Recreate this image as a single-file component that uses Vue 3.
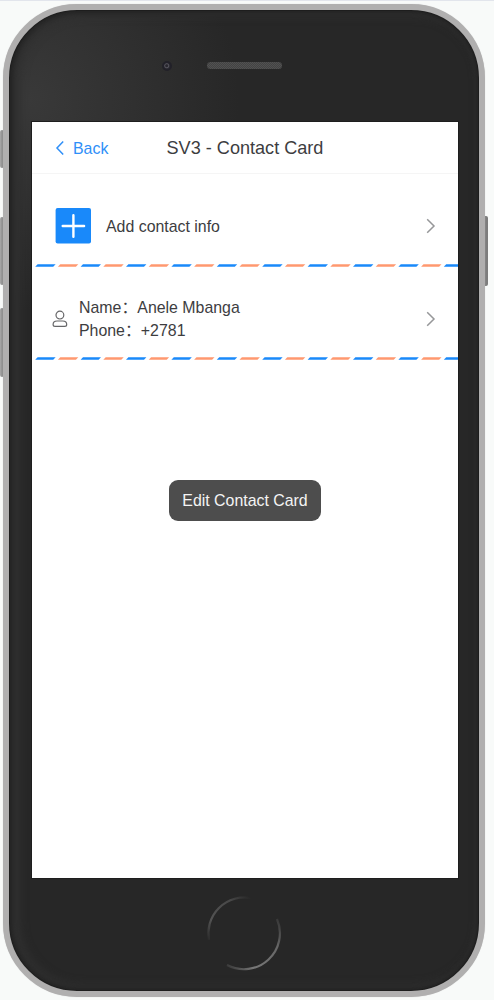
<script setup>
const period = 45.4
const dashes = Array.from({ length: 20 }, (_, i) => {
  const x = 3.2 + (i * period) / 2
  return {
    points: `${x},2.8 ${x + 2.4},0.2 ${x + 20.4},0.2 ${x + 18},2.8`,
    kind: i % 2 ? 'orange' : 'blue',
  }
})
</script>

<template>
  <div class="stage">
    <i class="key mute"></i>
    <i class="key up"></i>
    <i class="key down"></i>
    <i class="key power"></i>
    <div class="phone">
      <div class="top">
        <i class="camera"></i>
        <i class="speaker"></i>
      </div>
      <main class="screen">
        <header class="nav">
          <a class="back">
            <svg class="back-arrow" width="10" height="16" viewBox="0 0 10 16"><path d="M8.2 1.6 2 8l6.2 6.4" /></svg>
            <span>Back</span>
          </a>
          <h1>SV3 - Contact Card</h1>
        </header>
        <section class="card add">
          <svg class="plus" width="36" height="36" viewBox="0 0 36 36">
            <rect x="0.6" y="0" width="35.4" height="35.4" rx="2" />
            <path d="M18.4 7.3v21.4M7.7 18h21.4" />
          </svg>
          <span class="label">Add contact info</span>
          <svg class="arrow" width="10" height="16" viewBox="0 0 10 16"><path d="M1.2 1.3 8 8l-6.8 6.7" /></svg>
          <svg class="stripe" width="426" height="3"><polygon v-for="d in dashes" :key="d.points" :points="d.points" :class="d.kind" /></svg>
        </section>
        <section class="card edit">
          <svg class="person" width="16" height="18" viewBox="0 0 16 18">
            <circle cx="7.9" cy="5.1" r="3.9" />
            <path d="M5 11h5.800c2.200 0 3.900 1.500 3.900 3.500 0 1.200-.7 1.900-1.900 1.900H3c-1.200 0-1.900-.7-1.900-1.900C1.100 12.500 2.800 11 5 11Z" />
          </svg>
          <div class="details">
            <div>Name：Anele Mbanga</div>
            <div>Phone：+2781</div>
          </div>
          <svg class="arrow" width="10" height="16" viewBox="0 0 10 16"><path d="M1.2 1.3 8 8l-6.8 6.7" /></svg>
          <svg class="stripe" width="426" height="3"><polygon v-for="d in dashes" :key="d.points" :points="d.points" :class="d.kind" /></svg>
        </section>
        <div class="toast">Edit Contact Card</div>
      </main>
      <div class="bottom">
        <svg class="home" width="76" height="76" viewBox="0 0 76 76">
          <defs>
            <linearGradient id="homeUpper" gradientUnits="userSpaceOnUse" x1="3" y1="48" x2="44" y2="2">
              <stop offset="0" stop-color="#272727" />
              <stop offset=".3" stop-color="#535353" />
              <stop offset=".75" stop-color="#484848" />
              <stop offset="1" stop-color="#272727" />
            </linearGradient>
            <linearGradient id="homeLower" gradientUnits="userSpaceOnUse" x1="20" y1="70" x2="73" y2="21">
              <stop offset="0" stop-color="#3a3a3a" />
              <stop offset=".25" stop-color="#777" />
              <stop offset=".7" stop-color="#666" />
              <stop offset="1" stop-color="#303030" />
            </linearGradient>
          </defs>
          <path d="M3 45A36 36 0 0 1 45 3" stroke="url(#homeUpper)" />
          <path d="M21 70A36 36 0 0 0 71 24" stroke="url(#homeLower)" />
        </svg>
      </div>
    </div>
  </div>
</template>

<style>
body {
  background: #f8faf9;
}
</style>

<style scoped>
.stage {
  position: relative;
  box-sizing: border-box;
  width: 494px;
  height: 1000px;
  padding: 3px 0 0 3px;
  overflow: hidden;
  border-top: 1px solid #e2e5ec;
  background: #f8faf9;
  font-family: "Liberation Sans", "Noto Sans CJK SC", sans-serif;
}

.key {
  position: absolute;
  background: linear-gradient(90deg, #aaa, #858585 70%, #777);
  border-radius: 2px;
}
.mute { left: 0; top: 129px; width: 4px; height: 38px; }
.up { left: 0; top: 216px; width: 4px; height: 68px; }
.down { left: 0; top: 307px; width: 4px; height: 69px; }
.power { left: 483px; top: 215px; width: 5px; height: 70px; background: #7d7d7d; }

.phone {
  position: relative;
  box-sizing: border-box;
  display: flex;
  flex-direction: column;
  width: 482px;
  height: 993px;
  padding-left: 23px;
  border: 6px solid #b0afaf;
  border-radius: 74px;
  background:
    radial-gradient(circle at 20px 90px, #393939 0, #30303000 210px),
    #272727;
  box-shadow:
    inset 0 0 2px 1px #1b1b1b,
    inset 0 0 3px 5px #292929,
    inset 5px 0 8px 6px #303030,
    0 0 1px #c9c9c9;
}

.top {
  display: flex;
  align-items: flex-start;
  flex: 0 0 112px;
  padding: 51px 0 0 130px;
  box-sizing: border-box;
}
.camera {
  box-sizing: border-box;
  width: 10px;
  height: 10px;
  border-radius: 50%;
  border: 2px solid #222129;
  background: radial-gradient(circle at 45% 45%, #28272e 0 1px, #56545d 2px, #2c2b33 3px);
}
.speaker {
  width: 75px;
  height: 7px;
  margin: 1px 0 0 35px;
  border-radius: 4px;
  background: repeating-conic-gradient(#515151 0 25%, #434343 0 50%) 0 0 / 2px 2px;
}

.screen {
  position: relative;
  flex: 0 0 756px;
  width: 426px;
  background: #fff;
  box-shadow: 0 0 0 1px #1e1e1e;
  color: #3d3d3f;
}
.nav {
  position: relative;
  display: flex;
  align-items: center;
  justify-content: center;
  box-sizing: border-box;
  height: 52px;
  border-bottom: 1px solid #f5f5f5;
}
.back {
  position: absolute;
  left: 23px;
  top: 0;
  display: flex;
  align-items: center;
  gap: 8px;
  height: 52px;
  color: #2f8ff8;
  font-size: 15.9px;
}
.back span {
  padding-top: 1px;
}
h1 {
  margin: 0;
  padding-top: 2px;
  font-size: 18.1px;
  font-weight: 400;
}
svg {
  display: block;
  fill: none;
}
.back-arrow {
  stroke: #2f8ff8;
  stroke-width: 1.5;
}
.card {
  position: relative;
  display: flex;
  align-items: center;
  box-sizing: border-box;
  height: 93px;
  padding-right: 22px;
  font-size: 15.9px;
  line-height: 22.7px;
}
.add {
  padding-left: 23px;
  padding-top: 11px;
}
.add .label {
  margin-left: 15px;
  padding-top: 2px;
}
.edit {
  padding-left: 20px;
  padding-top: 11px;
}
.details {
  margin-left: 11px;
  padding-top: 2px;
}
.plus rect { fill: #1989fa; }
.plus path { stroke: #fff; stroke-width: 2.4; stroke-linecap: round; }
.person {
  stroke: #666668;
  stroke-width: 1.2;
}
.arrow {
  margin-left: auto;
  stroke: #969799;
  stroke-width: 1.5;
}
.stripe {
  position: absolute;
  left: 0;
  bottom: 0;
}
.blue { fill: #1989fa; }
.orange { fill: #ff986f; }

.toast {
  position: absolute;
  left: 137px;
  top: 358px;
  display: flex;
  align-items: center;
  justify-content: center;
  width: 152px;
  height: 41px;
  border-radius: 9px;
  background: #4d4d4d;
  color: #f4f4f4;
  font-size: 15.9px;
}

.bottom {
  display: flex;
  flex: 1;
  padding: 17px 0 0 174px;
}
.home path {
  stroke-width: 2.2;
}
</style>
